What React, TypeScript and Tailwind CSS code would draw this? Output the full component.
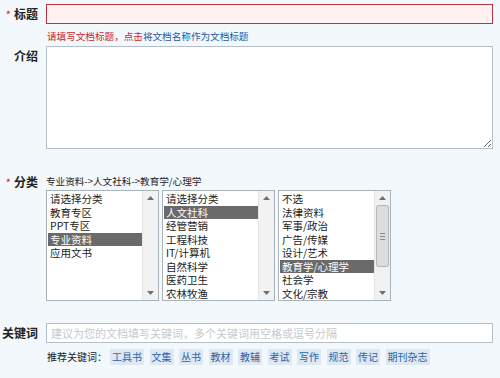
import React from 'react';

const col1 = ['请选择分类', '教育专区', 'PPT专区', '专业资料', '应用文书'];
const col2 = ['请选择分类', '人文社科', '经管营销', '工程科技', 'IT/计算机', '自然科学', '医药卫生', '农林牧渔'];
const col3 = ['不选', '法律资料', '军事/政治', '广告/传媒', '设计/艺术', '教育学/心理学', '社会学', '文化/宗教'];
const tags = ['工具书', '文集', '丛书', '教材', '教辅', '考试', '写作', '规范', '传记', '期刊杂志'];

const font = { fontFamily: '"Noto Sans CJK SC", "Liberation Sans", sans-serif' };

function Arrow({ up }: { up?: boolean }) {
  return (
    <div className="flex h-[14px] items-center justify-center">
      <svg width="7" height="4" viewBox="0 0 7 4">
        <path d={up ? 'M0 4 L3.5 0 L7 4 Z' : 'M0 0 L3.5 4 L7 0 Z'} fill="#6f6f6f" />
      </svg>
    </div>
  );
}

function ListBox({ items, selected, thumb }: { items: string[]; selected: string; thumb?: boolean }) {
  return (
    <div className="flex h-[111px] w-[113px] border border-[#a9b3bb] bg-white">
      <div className="flex-1 overflow-hidden pt-[1px] pl-[1px]">
        {items.map((it) => (
          <div
            key={it}
            className={`h-[13.5px] pl-[2px] text-[10.5px] leading-[13.5px] whitespace-nowrap ${
              it === selected ? 'bg-[#6a6a6a] text-white' : 'text-[#222]'
            }`}
          >
            {it}
          </div>
        ))}
      </div>
      <div className="flex w-[16px] flex-col justify-between border-l border-[#e4e4e4] bg-[#f2f2f2]">
        <Arrow up />
        {thumb && (
          <div className="mx-[1px] flex h-[62px] flex-col items-center justify-center gap-[2px] rounded-[2px] border border-[#b9b9b9] bg-[#dcdcdc]">
            <div className="h-px w-[5px] bg-[#8a8a8a]" />
            <div className="h-px w-[5px] bg-[#8a8a8a]" />
            <div className="h-px w-[5px] bg-[#8a8a8a]" />
          </div>
        )}
        <div className={thumb ? 'flex-1' : 'hidden'} />
        <Arrow />
      </div>
    </div>
  );
}

function Label({ text, star }: { text: string; star?: boolean }) {
  return (
    <div className="flex w-[46px] shrink-0 justify-end pr-[8px] text-[12px] leading-[20px] font-bold whitespace-nowrap text-[#222]">
      {star && <span className="mr-[3px] text-[11px] font-normal text-[#d22]">*</span>}
      {text}
    </div>
  );
}

export default function App() {
  return (
    <div className="h-[378px] w-[500px] overflow-hidden bg-[#f3f8fc] pt-[4px]" style={font}>
      <div className="flex items-start">
        <Label text="标题" star />
        <div className="h-[20px] w-[447px] border border-[#b8353d] bg-[#fff1f1]" />
      </div>
      <div className="mt-[5px] ml-[47px] text-[9.6px] leading-[14px]">
        <span className="text-[#cc1f1f]">请填写文档标题，点击</span>
        <span className="text-[#1d5c9e]">将文档名称作为文档标题</span>
      </div>
      <div className="mt-[3px] flex items-start">
        <Label text="介绍" />
        <textarea className="h-[103px] w-[447px] resize border border-[#b5bfc8] bg-white outline-none" />
      </div>
      <div className="mt-[23px] flex items-start">
        <Label text="分类" star />
        <div className="flex flex-col">
          <div className="text-[9.6px] leading-[18px] text-[#222]">专业资料-&gt;人文社科-&gt;教育学/心理学</div>
          <div className="flex gap-[3px]">
            <ListBox items={col1} selected="专业资料" />
            <ListBox items={col2} selected="人文社科" />
            <ListBox items={col3} selected="教育学/心理学" thumb />
          </div>
        </div>
      </div>
      <div className="mt-[22px] flex items-start">
        <Label text="关键词" />
        <div className="flex h-[20px] w-[447px] items-center border border-[#b5bfc8] bg-white pl-[4px] text-[11px] whitespace-nowrap text-[#c4c9cf]">
          建议为您的文档填写关键词，多个关键词用空格或逗号分隔
        </div>
      </div>
      <div className="mt-[6px] ml-[47px] flex items-center text-[10px] leading-[16px]">
        <span className="mr-[3px] text-[#222]">推荐关键词：</span>
        <div className="flex gap-[5.5px]">
          {tags.map((t) => (
            <span key={t} className="bg-[#dde8f3] px-[2px] text-[#2b64a6]">
              {t}
            </span>
          ))}
        </div>
      </div>
    </div>
  );
}
